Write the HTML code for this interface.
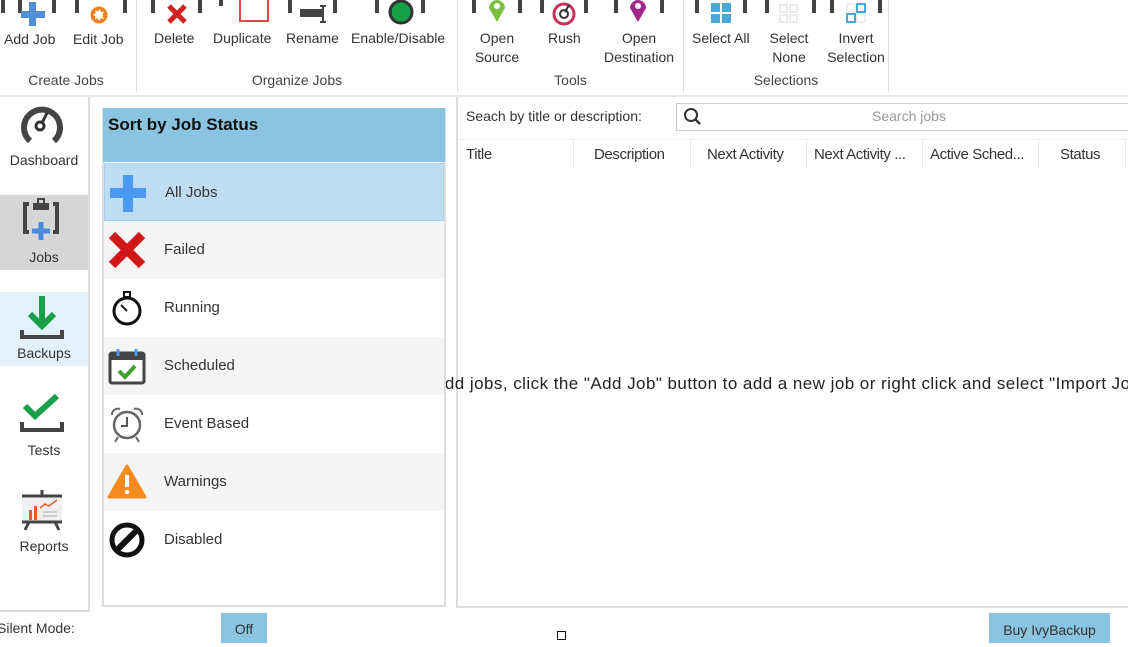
<!DOCTYPE html>
<html><head><meta charset="utf-8"><style>
*{margin:0;padding:0;box-sizing:border-box}
body{width:1128px;height:643px;overflow:hidden;background:#fff;font-family:"Liberation Sans",sans-serif;position:relative;color:#222}
.a{position:absolute}
.bar{position:absolute;top:0;width:4px;height:13px;background:#444}
.sep{position:absolute;top:0;width:1px;height:92px;background:#ddd}
.grp{position:absolute;top:72px;font-size:14px;color:#444;text-align:center}
.lbl{position:absolute;font-size:14px;color:#333;text-align:center;line-height:19px;white-space:nowrap}
.row{position:absolute;left:104px;width:340px;height:58px}
.row span{position:absolute;left:60px;top:20px;font-size:15px;color:#333}
.nav{position:absolute;left:0;width:88px;text-align:center;font-size:14px;color:#333}
.col{position:absolute;top:146px;font-size:15px;color:#333;letter-spacing:-0.4px}
.cs{position:absolute;top:141px;width:1px;height:28px;background:#e6e6e6}
</style></head><body>
<div class="bar" style="left:1px"></div><div class="bar" style="left:18px"></div>
<div class="bar" style="left:52px"></div><div class="bar" style="left:75px"></div><div class="bar" style="left:123px"></div>
<div class="bar" style="left:151px"></div><div class="bar" style="left:198px"></div><div class="bar" style="left:219px;height:6px"></div>
<div class="bar" style="left:288px"></div><div class="bar" style="left:333px"></div><div class="bar" style="left:375px"></div><div class="bar" style="left:421px"></div>
<div class="bar" style="left:472px"></div><div class="bar" style="left:518px"></div><div class="bar" style="left:540px"></div><div class="bar" style="left:584px"></div>
<div class="bar" style="left:614px"></div><div class="bar" style="left:660px"></div>
<div class="bar" style="left:695px"></div><div class="bar" style="left:743px"></div><div class="bar" style="left:765px"></div><div class="bar" style="left:812px"></div><div class="bar" style="left:830px"></div><div class="bar" style="left:878px"></div>
<svg class="a" style="left:20px;top:2px" width="26" height="24"><path d="M9 0h7v9h9v7h-9v8h-7v-8h-8v-7h8z" fill="#4f8fd8"/></svg>
<svg class="a" style="left:88px;top:4px" width="22" height="22"><circle cx="11" cy="11" r="6" fill="none" stroke="#f08020" stroke-width="4" stroke-dasharray="3 2"/><circle cx="11" cy="11" r="7" fill="none" stroke="#f08020" stroke-width="3"/></svg>
<svg class="a" style="left:166px;top:3px" width="22" height="22"><path d="M3 3l16 16M19 3L3 19" stroke="#d42020" stroke-width="5"/></svg>
<div class="a" style="left:239px;top:0;width:30px;height:22px;border:2px solid #e04848;border-top:none"></div>
<svg class="a" style="left:298px;top:4px" width="34" height="20"><rect x="2" y="5" width="22" height="8" fill="#444"/><path d="M25 2v16M22 2h6M22 18h6" stroke="#444" stroke-width="2"/></svg>
<svg class="a" style="left:386px;top:0" width="30" height="26"><circle cx="15" cy="12" r="11" fill="#18a048" stroke="#333" stroke-width="3"/></svg>
<svg class="a" style="left:486px;top:0" width="22" height="24"><path d="M11 22L3 8A8 8 0 1 1 19 8z" fill="#7cc040"/><circle cx="11" cy="6" r="3" fill="#fff"/></svg>
<svg class="a" style="left:551px;top:1px" width="26" height="26"><circle cx="13" cy="13" r="10" fill="none" stroke="#c8305a" stroke-width="3"/><circle cx="13" cy="13" r="4" fill="none" stroke="#333" stroke-width="2"/><path d="M14 11l4-7" stroke="#333" stroke-width="2"/></svg>
<svg class="a" style="left:627px;top:0" width="22" height="24"><path d="M11 22L3 8A8 8 0 1 1 19 8z" fill="#a02888"/><circle cx="11" cy="6" r="3" fill="#fff"/></svg>
<svg class="a" style="left:710px;top:2px" width="24" height="24"><g fill="#4aa8d8"><rect x="1" y="1" width="9" height="9"/><rect x="12" y="1" width="9" height="9"/><rect x="1" y="12" width="9" height="9"/><rect x="12" y="12" width="9" height="9"/></g></svg>
<svg class="a" style="left:778px;top:3px" width="24" height="24"><g fill="none" stroke="#e4e4e4" stroke-width="1.5"><rect x="2" y="2" width="7" height="7"/><rect x="12" y="2" width="7" height="7"/><rect x="2" y="12" width="7" height="7"/><rect x="12" y="12" width="7" height="7"/></g></svg>
<svg class="a" style="left:845px;top:2px" width="24" height="24"><g fill="none" stroke="#4aa8d8" stroke-width="2"><rect x="12" y="2" width="8" height="8"/><rect x="2" y="12" width="8" height="8"/></g><g fill="none" stroke="#ddd"><rect x="2" y="2" width="8" height="8"/><rect x="12" y="12" width="8" height="8"/></g></svg>
<div class="lbl" style="left:4px;top:30px">Add Job</div>
<div class="lbl" style="left:73px;top:30px">Edit Job</div>
<div class="lbl" style="left:154px;top:29px">Delete</div>
<div class="lbl" style="left:213px;top:29px">Duplicate</div>
<div class="lbl" style="left:286px;top:29px">Rename</div>
<div class="lbl" style="left:351px;top:29px">Enable/Disable</div>
<div class="lbl" style="left:474px;top:29px;width:46px">Open<br>Source</div>
<div class="lbl" style="left:548px;top:29px">Rush</div>
<div class="lbl" style="left:600px;top:29px;width:78px">Open<br>Destination</div>
<div class="lbl" style="left:692px;top:29px">Select All</div>
<div class="lbl" style="left:765px;top:29px;width:48px">Select<br>None</div>
<div class="lbl" style="left:824px;top:29px;width:64px">Invert<br>Selection</div>
<div class="grp" style="left:0;width:132px">Create Jobs</div>
<div class="grp" style="left:137px;width:320px">Organize Jobs</div>
<div class="grp" style="left:458px;width:225px">Tools</div>
<div class="grp" style="left:684px;width:204px">Selections</div>
<div class="sep" style="left:136px"></div><div class="sep" style="left:457px"></div><div class="sep" style="left:683px"></div><div class="sep" style="left:888px"></div>
<div class="a" style="left:0;top:95px;width:1128px;height:2px;background:#e8e8e8"></div>
<div class="a" style="left:0;top:97px;width:90px;height:515px;border-right:2px solid #ddd;border-bottom:2px solid #ddd"></div>
<div class="a" style="left:0;top:195px;width:88px;height:75px;background:#d6d6d6"></div>
<div class="a" style="left:0;top:292px;width:88px;height:74px;background:#e3f1fc"></div>
<svg class="a" style="left:19px;top:102px" width="46" height="46"><path d="M11 39A18 18 0 1 1 35 39" fill="none" stroke="#444" stroke-width="6"/><circle cx="21" cy="24" r="4" fill="none" stroke="#333" stroke-width="3"/><path d="M23 21l5-10" stroke="#333" stroke-width="3"/></svg>
<div class="nav" style="top:152px">Dashboard</div>
<svg class="a" style="left:19px;top:197px" width="46" height="46"><path d="M10 7h-4v28h4M34 7h4v28h-4" fill="none" stroke="#444" stroke-width="4"/><rect x="14" y="6" width="16" height="7" fill="#444"/><rect x="19" y="2" width="6" height="6" fill="none" stroke="#444" stroke-width="2"/><path d="M22 25v18M13 34h18" stroke="#4a8ad8" stroke-width="5"/></svg>
<div class="nav" style="top:249px">Jobs</div>
<svg class="a" style="left:19px;top:294px" width="46" height="46"><path d="M23 2v30M11 20l12 12 12-12" fill="none" stroke="#18a048" stroke-width="6"/><path d="M3 36v7h40v-7" fill="none" stroke="#444" stroke-width="4"/></svg>
<div class="nav" style="top:345px">Backups</div>
<svg class="a" style="left:19px;top:394px" width="46" height="40"><path d="M6 12l10 10 22-20" fill="none" stroke="#18a048" stroke-width="6"/><path d="M3 28v8h40v-8" fill="none" stroke="#444" stroke-width="4"/></svg>
<div class="nav" style="top:442px">Tests</div>
<svg class="a" style="left:19px;top:488px" width="46" height="46"><rect x="3" y="8" width="40" height="26" fill="#f0f0f0"/><path d="M3 8h40M3 34h40M23 2v6M10 34l-4 8M36 34l4 8" stroke="#444" stroke-width="3"/><rect x="10" y="22" width="3" height="10" fill="#e85a30"/><rect x="15" y="18" width="3" height="14" fill="#e85a30"/><path d="M21 20l5-4 4 2 8-6" stroke="#e85a30" fill="none" stroke-width="1.5"/><path d="M24 24h14M24 28h14" stroke="#aaa"/></svg>
<div class="nav" style="top:538px">Reports</div>
<div class="a" style="left:102px;top:108px;width:344px;height:499px;border:2px solid #ddd"></div>
<div class="a" style="left:103px;top:108px;width:342px;height:54px;background:#8ac4e0"></div>
<div class="a" style="left:108px;top:115px;font-size:17px;font-weight:bold;color:#111">Sort by Job Status</div>
<div class="row" style="top:163px;background:#bedcf2;border:1px solid #a8cff0"><svg class="a" style="left:3px;top:9px" width="40" height="40"><path d="M15 2h10v13h13v10h-13v14h-10v-14h-13v-10h13z" fill="#4a98f0"/></svg><span>All Jobs</span></div>
<div class="row" style="top:221px;background:#f5f5f5"><svg class="a" style="left:4px;top:10px" width="38" height="38"><path d="M4 4l30 30M34 4L4 34" stroke="#d01818" stroke-width="9"/></svg><span>Failed</span></div>
<div class="row" style="top:279px"><svg class="a" style="left:6px;top:10px" width="34" height="38"><circle cx="17" cy="22" r="13" fill="#fff" stroke="#111" stroke-width="3"/><rect x="14" y="3" width="6" height="5" fill="none" stroke="#111" stroke-width="2"/><path d="M11 16l6 6" stroke="#222" stroke-width="2"/></svg><span>Running</span></div>
<div class="row" style="top:337px;background:#f5f5f5"><svg class="a" style="left:3px;top:10px" width="40" height="40"><rect x="3" y="6" width="34" height="30" rx="2" fill="#fff" stroke="#444" stroke-width="3"/><rect x="3" y="6" width="34" height="7" fill="#444"/><path d="M11 2v7M29 2v7" stroke="#4a98f0" stroke-width="3"/><path d="M12 24l6 6 10-11" fill="none" stroke="#40a030" stroke-width="4"/></svg><span>Scheduled</span></div>
<div class="row" style="top:395px"><svg class="a" style="left:4px;top:10px" width="38" height="40"><circle cx="19" cy="20" r="13" fill="none" stroke="#666" stroke-width="2.5"/><path d="M19 12v9h-6" fill="none" stroke="#555" stroke-width="2"/><path d="M4 10a6 6 0 0 1 8-6M34 10a6 6 0 0 0-8-6M10 32l-3 5M28 32l3 5" fill="none" stroke="#666" stroke-width="2"/></svg><span>Event Based</span></div>
<div class="row" style="top:453px;background:#f5f5f5"><svg class="a" style="left:3px;top:10px" width="40" height="38"><path d="M20 3L38 34H2z" fill="#f58a1f" stroke="#f58a1f" stroke-width="3" stroke-linejoin="round"/><path d="M20 12v12" stroke="#fff" stroke-width="4"/><circle cx="20" cy="29" r="2.2" fill="#fff"/></svg><span>Warnings</span></div>
<div class="row" style="top:511px"><svg class="a" style="left:4px;top:10px" width="38" height="38"><circle cx="19" cy="19" r="15" fill="none" stroke="#111" stroke-width="5"/><path d="M29 9L9 29" stroke="#111" stroke-width="6"/></svg><span>Disabled</span></div>
<div class="a" style="left:456px;top:97px;width:674px;height:511px;border-left:2px solid #ddd;border-bottom:2px solid #ddd"></div>
<div class="a" style="left:466px;top:108px;font-size:14px;color:#333">Seach by title or description:</div>
<div class="a" style="left:676px;top:103px;width:460px;height:28px;border:1px solid #ccc;background:#fff"></div>
<svg class="a" style="left:683px;top:107px" width="20" height="20"><circle cx="8" cy="8" r="6" fill="none" stroke="#333" stroke-width="2"/><path d="M12 12l5 5" stroke="#333" stroke-width="2.5"/></svg>
<div class="a" style="left:872px;top:108px;font-size:14px;color:#999">Search jobs</div>
<div class="a" style="left:458px;top:139px;width:670px;height:1px;background:#eee"></div>
<div class="col" style="left:466px">Title</div>
<div class="col" style="left:594px">Description</div>
<div class="col" style="left:707px">Next Activity</div>
<div class="col" style="left:814px">Next Activity ...</div>
<div class="col" style="left:930px">Active Sched...</div>
<div class="col" style="left:1060px">Status</div>
<div class="cs" style="left:573px"></div><div class="cs" style="left:690px"></div><div class="cs" style="left:806px"></div><div class="cs" style="left:922px"></div><div class="cs" style="left:1038px"></div><div class="cs" style="left:1125px"></div>
<div class="a" style="left:446px;top:374px;width:682px;height:24px;overflow:hidden"><div class="a" style="left:-11px;top:0;font-size:17px;color:#222;white-space:nowrap;letter-spacing:0.45px">add jobs, click the "Add Job" button to add a new job or right click and select "Import Jobs"</div></div>
<div class="a" style="left:-3px;top:620px;font-size:14px;color:#333">Silent Mode:</div>
<div class="a" style="left:221px;top:613px;width:46px;height:30px;background:#8ac4e0;font-size:14px;text-align:center;line-height:32px;color:#333">Off</div>
<div class="a" style="left:557px;top:631px;width:9px;height:9px;border:1.5px solid #111"></div>
<div class="a" style="left:989px;top:613px;width:121px;height:30px;background:#8ac4e0;font-size:14px;text-align:center;line-height:34px;color:#333">Buy IvyBackup</div>
</body></html>
